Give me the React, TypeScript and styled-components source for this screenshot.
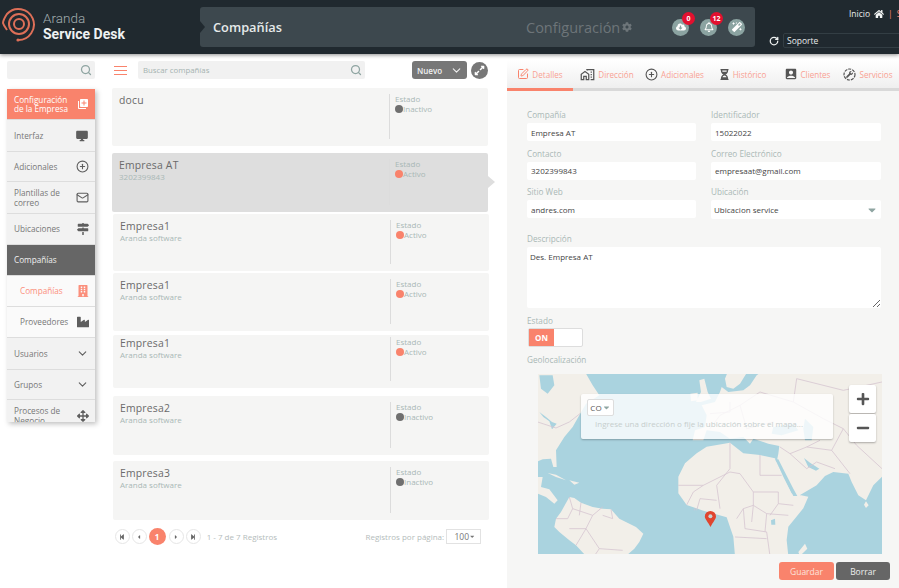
import { ReactNode } from 'react';
import styled, { createGlobalStyle } from 'styled-components';
import {
  FaArrowsAlt,
  FaBuilding,
  FaCloudDownloadAlt,
  FaCog,
  FaExpandAlt,
  FaHome,
  FaHourglassHalf,
  FaIndustry,
  FaMagic,
  FaMapSigns,
  FaPlus,
  FaMinus,
  FaRegBell,
  FaStepBackward,
  FaStepForward,
  FaCaretLeft,
  FaCaretRight,
  FaCaretDown,
  FaWrench,
} from 'react-icons/fa';
import { MdAccountBox, MdDesktopWindows, MdOutlineHomeWork, MdLibraryAdd } from 'react-icons/md';
import { ChevronDown, CirclePlus, Mail, RotateCw, Search, SquarePen } from 'lucide-react';

const CORAL = '#f9836c';
const FONT = '"Open Sans", "Noto Sans", sans-serif';

const GlobalStyle = createGlobalStyle`
  html, body {
    margin: 0;
    padding: 0;
    background: #fff;
    font-family: ${FONT};
  }
  * { box-sizing: border-box; }
`;

const Page = styled.div`
  width: 899px;
  height: 588px;
  overflow: hidden;
  display: flex;
  flex-direction: column;
`;

/* header */

const Header = styled.header`
  height: 54px;
  flex: none;
  background: #20292f;
  box-shadow: 0 1px 4px rgba(0, 0, 0, 0.45);
  display: flex;
  position: relative;
  z-index: 2;
`;

const Brand = styled.div`
  width: 200px;
  padding: 7px 0 0 2px;
  display: flex;
  gap: 5px;
`;

const BrandText = styled.div`
  display: flex;
  flex-direction: column;
  padding-top: 3px;
  font-family: Roboto, sans-serif;
`;

const BrandLight = styled.span`
  font-size: 13.5px;
  line-height: 16px;
  font-weight: 300;
  color: #a3aeb0;
`;

const BrandBold = styled.span`
  font-size: 14px;
  line-height: 17px;
  font-weight: 700;
  color: #eef1f1;
`;

const TitleBar = styled.div`
  width: 555px;
  height: 40px;
  margin-top: 7px;
  background: #3d484e;
  border-radius: 3px;
  display: flex;
  align-items: center;
  padding-left: 13px;
  position: relative;
  &::before {
    content: '';
    position: absolute;
    left: 0;
    top: 14px;
    border-left: 5px solid #20292f;
    border-top: 6px solid transparent;
    border-bottom: 6px solid transparent;
  }
`;

const PageTitle = styled.span`
  font-size: 12.8px;
  font-weight: 600;
  color: #e6eaea;
  width: 313px;
`;

const ConfigLabel = styled.span`
  font-size: 14.5px;
  color: #6d7579;
  width: 93px;
  white-space: nowrap;
`;

const GearWrap = styled.span`
  color: #6d7579;
  font-size: 10px;
  margin-left: 3px;
  display: flex;
  width: 50px;
`;

const RoundIcons = styled.div`
  display: flex;
  gap: 11px;
`;

const RoundIcon = styled.div`
  width: 17px;
  height: 17px;
  border-radius: 50%;
  background: #8ba3a1;
  color: #fff;
  font-size: 10px;
  display: flex;
  align-items: center;
  justify-content: center;
  position: relative;
`;

const Badge = styled.span`
  position: absolute;
  top: -7px;
  right: -6px;
  width: 13px;
  height: 13px;
  border-radius: 50%;
  background: #e3102f;
  color: #fff;
  font-size: 7px;
  font-weight: 700;
  line-height: 13px;
  text-align: center;
`;

const UserArea = styled.div`
  flex: 1;
  padding: 7px 0 0 14px;
  display: flex;
  flex-direction: column;
  overflow: hidden;
`;

const TopLinks = styled.div`
  height: 13px;
  padding-left: 80px;
  display: flex;
  align-items: center;
  font-size: 8.5px;
  color: #e8ecec;
  white-space: nowrap;
`;

const HomeGlyph = styled.span`
  flex: none;
  display: flex;
  margin-left: 4px;
  font-size: 10px;
  color: #f4f6f6;
`;

const Pipe = styled.span`
  color: ${CORAL};
  margin-left: 4px;
`;

const RoleRow = styled.div`
  margin-top: 13px;
  display: flex;
  align-items: center;
  gap: 4px;
  color: #eef1f1;
`;

const RoleSelect = styled.div`
  flex: 1;
  height: 15px;
  margin-right: -4px;
  border: 1px solid #333e44;
  border-radius: 2px;
  padding-left: 3px;
  font-size: 8.5px;
  line-height: 13px;
  color: #e8ecec;
`;

/* content */

const Content = styled.div`
  flex: 1;
  display: flex;
  min-height: 0;
`;

const NavColumn = styled.aside`
  width: 112px;
  flex: none;
  padding: 7px 17px 0 7px;
`;

const SearchBox = styled.div<{ $width?: number }>`
  height: 18px;
  ${(p) => (p.$width ? `width: ${p.$width}px;` : '')}
  background: #f1f1f1;
  border-radius: 2px;
  display: flex;
  align-items: center;
  justify-content: space-between;
  padding: 0 3px 0 5px;
  font-size: 7.8px;
  color: #a4b2b0;
  svg { color: #8fa5a2; }
`;

const NavList = styled.nav`
  margin-top: 10px;
  height: 333px;
  overflow: hidden;
  box-shadow: 2px 2px 5px rgba(0, 0, 0, 0.25);
`;

type NavKind = 'current' | 'open' | 'sub' | 'subActive' | 'plain';

const navBackground: Record<NavKind, string> = {
  current: CORAL,
  open: '#666',
  sub: '#fafafa',
  subActive: '#fafafa',
  plain: '#f2f2f2',
};

const navColor: Record<NavKind, string> = {
  current: '#fff',
  open: '#f1f1f1',
  sub: '#777',
  subActive: '#fb8f7c',
  plain: '#777',
};

const NavItem = styled.div<{ $kind: NavKind; $h: number }>`
  height: ${(p) => p.$h}px;
  background: ${(p) => navBackground[p.$kind]};
  color: ${(p) => navColor[p.$kind]};
  border-bottom: 1px solid #ddd;
  padding: 0 6px 0 ${(p) => (p.$kind === 'sub' || p.$kind === 'subActive' ? 13 : 7)}px;
  display: flex;
  align-items: center;
  justify-content: space-between;
  font-size: 8.2px;
  line-height: 9.5px;
`;

const NavIcon = styled.span<{ $kind: NavKind }>`
  display: flex;
  font-size: 12px;
  color: ${(p) =>
    p.$kind === 'current' ? '#fff' : p.$kind === 'subActive' ? '#fb8f7c' : '#5e5e5e'};
`;

const ListColumn = styled.section`
  width: 395px;
  flex: none;
  padding: 7px 19px 0 0;
  display: flex;
  flex-direction: column;
`;

const ListTools = styled.div`
  height: 18px;
  display: flex;
  align-items: center;
`;

const Burger = styled.div`
  width: 13px;
  height: 9px;
  margin: 0 11px 0 2px;
  border-top: 1px solid ${CORAL};
  border-bottom: 1px solid ${CORAL};
  position: relative;
  &::after {
    content: '';
    position: absolute;
    left: 0;
    right: 0;
    top: 3px;
    height: 1px;
    background: ${CORAL};
  }
`;

const NewButton = styled.div`
  width: 55px;
  height: 18px;
  margin-left: 47px;
  background: #777;
  border-radius: 3px;
  color: #f0f0f0;
  font-size: 8px;
  font-weight: 600;
  display: flex;
  align-items: center;
  justify-content: space-between;
  padding: 0 4px 0 5px;
`;

const ExpandButton = styled.div`
  width: 17px;
  height: 17px;
  margin-left: 4px;
  border-radius: 50%;
  background: #777;
  color: #fff;
  font-size: 11px;
  display: flex;
  align-items: center;
  justify-content: center;
`;

const Row = styled.article<{ $top: number; $h: number; $nudge?: boolean; $selected?: boolean }>`
  height: ${(p) => p.$h}px;
  margin-top: ${(p) => p.$top}px;
  margin-left: ${(p) => (p.$nudge ? 1 : 0)}px;
  margin-right: ${(p) => (p.$nudge ? -1 : 0)}px;
  background: ${(p) => (p.$selected ? '#dedede' : '#f5f5f4')};
  border-radius: 2px;
  display: flex;
  position: relative;
  ${(p) =>
    p.$selected
      ? `&::after {
          content: '';
          position: absolute;
          right: -7px;
          top: 23px;
          border-left: 7px solid #dedede;
          border-top: 6px solid transparent;
          border-bottom: 6px solid transparent;
        }`
      : ''}
`;

const RowMain = styled.div<{ $inset: number }>`
  width: 277px;
  padding: ${(p) => p.$inset}px 0 0 7px;
`;

const RowTitle = styled.div`
  font-size: 10.4px;
  line-height: 13px;
  color: #6a6a6a;
  letter-spacing: 0.2px;
`;

const RowSub = styled.div`
  font-size: 8px;
  line-height: 10px;
  color: #a9b8b6;
`;

const RowState = styled.div<{ $inset: number }>`
  flex: 1;
  margin: ${(p) => p.$inset}px 0 7px;
  padding-left: 5px;
  border-left: 1px solid #dcdcdc;
`;

const StateLabel = styled.div`
  font-size: 8px;
  line-height: 10px;
  color: #a9b8b6;
`;

const StateValue = styled.div`
  font-size: 8px;
  line-height: 10px;
  color: #a9b8b6;
  display: flex;
  align-items: center;
`;

const Dot = styled.span<{ $on: boolean }>`
  width: 8px;
  height: 8px;
  flex: none;
  border-radius: 50%;
  background: ${(p) => (p.$on ? CORAL : '#6f6f6f')};
`;

const Pager = styled.div`
  margin-top: 8px;
  height: 17px;
  display: flex;
  align-items: center;
  padding-left: 2.5px;
  gap: 2px;
`;

const PagerButton = styled.div`
  width: 15px;
  height: 15px;
  border-radius: 50%;
  border: 1px solid #e6e6e6;
  font-size: 6px;
  color: #666;
  display: flex;
  align-items: center;
  justify-content: center;
`;

const PagerCurrent = styled.div`
  width: 17px;
  height: 17px;
  margin-right: 1px;
  border-radius: 50%;
  background: ${CORAL};
  color: #fff;
  font-size: 8px;
  font-weight: 700;
  display: flex;
  align-items: center;
  justify-content: center;
`;

const PagerText = styled.span<{ $width: number }>`
  width: ${(p) => p.$width}px;
  font-size: 8px;
  color: #b4bcbb;
  white-space: nowrap;
`;

const PerPage = styled.div`
  width: 35px;
  height: 15px;
  border: 1px solid #e2e2e2;
  font-size: 8.5px;
  color: #777;
  display: flex;
  align-items: center;
  justify-content: space-between;
  padding: 0 4px 0 8px;
`;

/* details */

const DetailPanel = styled.section`
  flex: 1;
  background: #f6f6f5;
  display: flex;
  flex-direction: column;
  margin-top: 6px;
`;

const Tabs = styled.div`
  height: 31px;
  flex: none;
  background: linear-gradient(#fff, #efefef);
  border-bottom: 3px solid #d9d9d9;
  display: flex;
  position: relative;
  white-space: nowrap;
`;

const Tab = styled.div<{ $width: number; $active?: boolean }>`
  width: ${(p) => p.$width}px;
  height: 31px;
  flex: none;
  border-bottom: 3px solid ${(p) => (p.$active ? CORAL : 'transparent')};
  display: flex;
  align-items: center;
  justify-content: center;
  gap: 3px;
  font-size: 8.1px;
  color: #f9a193;
`;

const TabIcon = styled.span<{ $active?: boolean }>`
  display: flex;
  font-size: 13px;
  color: ${(p) => (p.$active ? CORAL : '#555')};
  position: relative;
`;

const TinyWrench = styled.span`
  position: absolute;
  left: 3px;
  top: 3px;
  font-size: 7px;
  display: flex;
`;

const DetailBody = styled.div`
  padding: 18px 0 0 20px;
`;

const FormGrid = styled.div`
  display: grid;
  grid-template-columns: 169px 170px;
  column-gap: 15px;
  row-gap: 6.5px;
`;

const FieldLabel = styled.label`
  display: block;
  height: 14px;
  font-size: 8.2px;
  line-height: 12px;
  color: #aab8b6;
`;

const TextInput = styled.input`
  display: block;
  width: 100%;
  height: 18px;
  border: 0;
  border-radius: 2px;
  background: #fff;
  padding: 0 4px;
  font: 8px ${FONT};
  color: #444;
  outline: none;
`;

const SelectBox = styled.div`
  height: 19px;
  border-radius: 2px;
  background: #fff;
  padding: 0 3px 0 3px;
  display: flex;
  align-items: center;
  justify-content: space-between;
  font-size: 8px;
  color: #444;
  svg { color: #8fa5a2; }
`;

const DescField = styled.div`
  width: 354px;
  margin-top: 14px;
`;

const DescInput = styled.textarea`
  display: block;
  width: 100%;
  height: 61px;
  border: 0;
  border-radius: 2px;
  background: #fff;
  padding: 4px 3px;
  font: 8px ${FONT};
  color: #444;
  outline: none;
`;

const StateField = styled.div`
  margin-top: 7px;
  height: 32px;
`;

const Toggle = styled.div`
  width: 55px;
  height: 19px;
  margin-left: 1px;
  margin-top: -1px;
  border: 1px solid #ddd;
  border-radius: 2px;
  background: #fff;
  display: flex;
`;

const ToggleOn = styled.div`
  width: 25px;
  background: ${CORAL};
  color: #fff;
  font-size: 8px;
  font-weight: 700;
  display: flex;
  align-items: center;
  justify-content: center;
`;

const GeoLabel = styled(FieldLabel)`
  margin-top: 7px;
  margin-bottom: 6px;
`;

const MapFrame = styled.div`
  width: 344px;
  height: 180px;
  margin-left: 11px;
  position: relative;
  overflow: hidden;
`;

const MapCanvas = styled.svg`
  display: block;
  width: 344px;
  height: 180px;
`;

const AddressCard = styled.div`
  position: absolute;
  left: 43px;
  top: 20px;
  width: 252px;
  height: 45px;
  background: rgba(255, 255, 255, 0.8);
  border-radius: 2px;
  box-shadow: 0 1px 2px rgba(0, 0, 0, 0.25);
  padding: 5px 0 0 6px;
`;

const CountryPick = styled.div`
  width: 27px;
  height: 17px;
  background: #fff;
  border: 1px solid #ddd;
  border-radius: 2px;
  font-size: 8px;
  color: #555;
  display: flex;
  align-items: center;
  justify-content: center;
  svg { color: #8fa5a2; }
`;

const AddressHint = styled.div`
  margin: 3px 0 0 8px;
  font-size: 8px;
  line-height: 10px;
  color: #c6cecd;
  white-space: nowrap;
`;

const ZoomButtons = styled.div`
  position: absolute;
  left: 311px;
  top: 11px;
  display: flex;
  flex-direction: column;
  gap: 1px;
`;

const ZoomButton = styled.div`
  width: 27px;
  height: 28px;
  background: #fff;
  border-radius: 2px;
  box-shadow: 0 1px 2px rgba(0, 0, 0, 0.3);
  color: #555;
  font-size: 14px;
  display: flex;
  align-items: center;
  justify-content: center;
`;

const FormActions = styled.div`
  margin: 8px 9px 0 0;
  display: flex;
  justify-content: flex-end;
  gap: 2px;
`;

const ActionButton = styled.button<{ $primary?: boolean }>`
  width: ${(p) => (p.$primary ? 55 : 54)}px;
  height: 18px;
  border: 0;
  border-radius: 3px;
  background: ${(p) => (p.$primary ? CORAL : '#666')};
  color: ${(p) => (p.$primary ? '#fde3dd' : '#eee')};
  font: 8.5px ${FONT};
  padding: 0;
`;

/* data */

type NavEntry = { label: ReactNode; h: number; kind: NavKind; icon: ReactNode };

const navEntries: NavEntry[] = [
  { label: <>Configuración<br />de la Empresa</>, h: 31, kind: 'current', icon: <MdLibraryAdd /> },
  { label: 'Interfaz', h: 32, kind: 'plain', icon: <MdDesktopWindows size={14} /> },
  { label: 'Adicionales', h: 30, kind: 'plain', icon: <CirclePlus size={13} /> },
  { label: <>Plantillas de<br />correo</>, h: 32, kind: 'plain', icon: <Mail size={13} /> },
  { label: 'Ubicaciones', h: 31, kind: 'plain', icon: <FaMapSigns /> },
  { label: 'Compañías', h: 31, kind: 'open', icon: null },
  { label: 'Compañías', h: 31, kind: 'subActive', icon: <FaBuilding /> },
  { label: 'Proveedores', h: 31, kind: 'sub', icon: <FaIndustry /> },
  { label: 'Usuarios', h: 32, kind: 'plain', icon: <ChevronDown size={13} /> },
  { label: 'Grupos', h: 30, kind: 'plain', icon: <ChevronDown size={13} /> },
  { label: <>Procesos de<br />Negocio</>, h: 32, kind: 'plain', icon: <FaArrowsAlt /> },
];

type Company = {
  name: string;
  sub: string;
  on: boolean;
  top: number;
  h: number;
  inset: number;
  nudge?: boolean;
  selected?: boolean;
};

const companies: Company[] = [
  { name: 'docu', sub: '', on: false, top: 9, h: 58, inset: 6 },
  { name: 'Empresa AT', sub: '3202399843', on: true, top: 7, h: 59, inset: 6, selected: true },
  { name: 'Empresa1', sub: 'Aranda software', on: true, top: 2, h: 57, inset: 6, nudge: true },
  { name: 'Empresa1', sub: 'Aranda software', on: true, top: 2, h: 58, inset: 6, nudge: true },
  { name: 'Empresa1', sub: 'Aranda software', on: true, top: 4, h: 53, inset: 2, nudge: true },
  { name: 'Empresa2', sub: 'Aranda software', on: false, top: 8, h: 59, inset: 6, nudge: true },
  { name: 'Empresa3', sub: 'Aranda software', on: false, top: 6, h: 59, inset: 6, nudge: true },
];

// map outlines, in 3x px of the map's west and east halves
const westLand = [
  'M5 5 L150 5 L170 40 L190 70 L150 95 L130 130 L110 165 L85 195 L60 235 L62 285 L52 285 L45 260 L20 262 L5 268 Z',
  'M5 315 L20 315 L15 345 L40 352 L65 385 L55 395 L30 375 L5 365 Z',
  'M35 303 L60 308 L90 325 L60 315 Z',
  'M100 325 L130 332 L115 338 Z',
  'M60 440 L75 420 L100 375 L115 378 L135 392 L170 405 L200 410 L225 412 L250 440 L300 465 L322 485 L310 510 L295 530 L270 552 L150 552 L120 520 L100 505 L70 480 L55 465 Z',
  'M490 25 L505 20 L515 60 L525 80 L495 90 L480 90 L495 60 Z',
  'M463 65 L485 62 L485 85 L465 88 Z',
];

const eastLand = [
  'M160 -5 L520 -5 L520 310 L490 340 L468 385 L445 370 L425 330 L415 305 L370 300 L345 312 L320 340 L255 378 L245 350 L200 270 L205 245 L208 222 L175 215 L130 200 L120 215 L100 195 L60 200 L30 180 L-10 175 L-20 205 L-52 205 L-45 175 L-15 165 L-10 130 L-25 100 L15 90 L30 60 L35 45 L55 60 L100 55 L120 40 L140 10 Z',
  'M55 -5 L115 -5 L90 35 L70 50 L50 45 L45 20 Z',
  'M-95 314 L-75 274 L-40 244 L-10 224 L60 212 L100 244 L150 249 L195 259 L220 314 L245 364 L295 374 L280 409 L235 464 L230 504 L235 552 L75 552 L70 494 L50 436 L-20 416 L-70 399 L-95 364 Z',
  'M285 515 L292 530 L270 552 L265 540 Z',
  'M468 388 L476 400 L468 408 L462 398 Z',
];

const eastWater = [
  'M195 262 L205 262 L250 350 L262 372 L250 372 L220 310 Z',
  'M282 258 L300 272 L328 290 L318 296 L295 285 Z',
  'M190 165 L250 155 L265 175 L215 190 L185 185 Z',
  'M285 140 L310 165 L305 205 L285 205 L280 170 Z',
  'M183 445 L195 440 L196 458 L184 458 Z',
];

const westWater = [
  'M10 10 L50 10 L55 40 L35 65 L15 50 Z',
  'M10 120 L30 135 L48 150 L62 155 L48 172 L40 148 L22 135 Z',
];

const westBorders = [
  'M5 150 L60 168 L100 150 L132 125',
  'M100 375 L110 410 L95 440 L60 440',
  'M110 410 L170 430 L200 405',
  'M100 470 L150 470 L190 530 L175 552',
  'M135 392 L130 430',
  'M225 412 L230 440 L200 430',
  'M150 470 L120 520',
  'M190 530 L260 535',
  'M170 430 L150 470',
  'M430 310 L480 290 L525 300',
  'M440 350 L525 350',
  'M475 415 L490 380 L525 380',
];

const eastBorders = [
  'M-20 340 L60 300 L90 305 L130 360 L130 400',
  'M60 212 L60 290',
  'M150 249 L150 310 L215 310',
  'M130 360 L205 360 L205 395 L250 400',
  'M100 410 L130 400 L170 425 L235 430',
  'M80 440 L100 410 L105 470 L170 480 L180 552',
  'M75 495 L170 500',
  'M20 385 L-30 380 L-40 415',
  'M20 340 L30 410',
  'M-95 340 L-20 340',
  'M60 290 L20 340',
  'M-70 399 L-50 360 L-20 340',
  'M170 425 L165 480',
  'M205 395 L180 430',
  'M130 400 L125 450',
  'M240 245 L290 290 L320 270 L375 290',
  'M210 225 L240 245 L290 225 L365 235 L420 305',
  'M365 235 L400 170 L440 220 L516 290',
  'M290 225 L330 205',
  'M0 170 L30 130 L90 100 L110 170 L190 150',
  'M90 100 L150 60 L250 90 L340 140 L400 170',
  'M250 90 L260 20 L400 55 L516 30',
  'M0 125 L60 120 L60 90',
];

const tabs = [
  { label: 'Detalles', width: 66, active: true, icon: <SquarePen size={12} /> },
  { label: 'Dirección', width: 68, icon: <MdOutlineHomeWork size={15} /> },
  { label: 'Adicionales', width: 67, icon: <CirclePlus size={13} /> },
  { label: 'Histórico', width: 69, icon: <FaHourglassHalf size={11} /> },
  { label: 'Clientes', width: 60, icon: <MdAccountBox size={14} /> },
  { label: 'Servicios', width: 62, icon: <ServiceIcon /> },
];

function ServiceIcon() {
  return (
    <>
      <svg width="13" height="13" viewBox="0 0 13 13">
        <circle cx="6.5" cy="6.5" r="5.5" fill="none" stroke="#555" strokeWidth="1.2" strokeDasharray="3 1" />
      </svg>
      <TinyWrench>
        <FaWrench />
      </TinyWrench>
    </>
  );
}

function Logo() {
  return (
    <svg width="36" height="38" viewBox="0 0 36 38" fill="none" stroke="#dd6f58" strokeWidth="2">
      <circle cx="17" cy="17" r="5" />
      <circle cx="17" cy="17" r="10" />
      <path d="M16 33 A15.5 15.5 0 1 0 5 7 C3 10 1 13 1 16 C2 19 4 21 5 23" />
      <circle cx="16" cy="33" r="1.6" fill="#dd6f58" stroke="none" />
    </svg>
  );
}

function WorldMap() {
  return (
    <MapCanvas viewBox="0 0 344 180">
      <rect width="344" height="180" fill="#aad3df" />
      <g transform="translate(-2 -2) scale(0.3333)">
        <path d={westLand.join(' ')} fill="#f2efe9" />
        <path d={westWater.join(' ')} fill="#aad3df" />
        <path d={westBorders.join(' ')} fill="none" stroke="#d5c5d0" strokeWidth="2.4" />
      </g>
      <g transform="translate(172 -2) scale(0.3333)">
        <path d={eastLand.join(' ')} fill="#f2efe9" />
        <path d={eastWater.join(' ')} fill="#aad3df" />
        <path d={eastBorders.join(' ')} fill="none" stroke="#d5c5d0" strokeWidth="2.4" />
      </g>
      <path
        d="M172.5 153 C170 148 166.8 145 166.8 142.5 A5.6 5.6 0 0 1 178 142.5 C178 145 175 148 172.5 153 Z"
        fill="#e0452f"
      />
      <circle cx="172.4" cy="142.3" r="2" fill="#c9d3d3" />
    </MapCanvas>
  );
}

export default function App() {
  return (
    <Page>
      <GlobalStyle />
      <Header>
        <Brand>
          <Logo />
          <BrandText>
            <BrandLight>Aranda</BrandLight>
            <BrandBold>Service Desk</BrandBold>
          </BrandText>
        </Brand>
        <TitleBar>
          <PageTitle>Compañías</PageTitle>
          <ConfigLabel>Configuración</ConfigLabel>
          <GearWrap>
            <FaCog />
          </GearWrap>
          <RoundIcons>
            <RoundIcon>
              <FaCloudDownloadAlt />
              <Badge>0</Badge>
            </RoundIcon>
            <RoundIcon>
              <FaRegBell />
              <Badge>12</Badge>
            </RoundIcon>
            <RoundIcon>
              <FaMagic />
            </RoundIcon>
          </RoundIcons>
        </TitleBar>
        <UserArea>
          <TopLinks>
            Inicio
            <HomeGlyph>
              <FaHome />
            </HomeGlyph>
            <Pipe>|</Pipe>
            <Pipe>S</Pipe>
          </TopLinks>
          <RoleRow>
            <RotateCw size={10} strokeWidth={3} />
            <RoleSelect>Soporte</RoleSelect>
          </RoleRow>
        </UserArea>
      </Header>

      <Content>
        <NavColumn>
          <SearchBox>
            <span />
            <Search size={12} strokeWidth={2.5} />
          </SearchBox>
          <NavList>
            {navEntries.map((item, i) => (
              <NavItem key={i} $kind={item.kind} $h={item.h}>
                <span>{item.label}</span>
                <NavIcon $kind={item.kind}>{item.icon}</NavIcon>
              </NavItem>
            ))}
          </NavList>
        </NavColumn>

        <ListColumn>
          <ListTools>
            <Burger />
            <SearchBox $width={227}>
              Buscar compañías
              <Search size={12} strokeWidth={2.5} />
            </SearchBox>
            <NewButton>
              Nuevo
              <ChevronDown size={13} />
            </NewButton>
            <ExpandButton>
              <FaExpandAlt />
            </ExpandButton>
          </ListTools>

          {companies.map((c, i) => (
            <Row key={i} $top={c.top} $h={c.h} $nudge={c.nudge} $selected={c.selected}>
              <RowMain $inset={c.inset}>
                <RowTitle>{c.name}</RowTitle>
                <RowSub>{c.sub}</RowSub>
              </RowMain>
              <RowState $inset={c.inset}>
                <StateLabel>Estado</StateLabel>
                <StateValue>
                  <Dot $on={c.on} />
                  {c.on ? 'Activo' : 'Inactivo'}
                </StateValue>
              </RowState>
            </Row>
          ))}

          <Pager>
            <PagerButton><FaStepBackward /></PagerButton>
            <PagerButton><FaCaretLeft /></PagerButton>
            <PagerCurrent>1</PagerCurrent>
            <PagerButton><FaCaretRight /></PagerButton>
            <PagerButton><FaStepForward /></PagerButton>
            <PagerText $width={161}>&nbsp;&nbsp;1 - 7 de 7 Registros</PagerText>
            <PagerText $width={78}>Registros por página:</PagerText>
            <PerPage>
              100
              <FaCaretDown size={7} />
            </PerPage>
          </Pager>
        </ListColumn>

        <DetailPanel>
          <Tabs>
            {tabs.map((t) => (
              <Tab key={t.label} $width={t.width} $active={t.active}>
                <TabIcon $active={t.active}>{t.icon}</TabIcon>
                {t.label}
              </Tab>
            ))}
          </Tabs>
          <DetailBody>
            <FormGrid>
              <div>
                <FieldLabel>Compañía</FieldLabel>
                <TextInput readOnly value="Empresa AT" />
              </div>
              <div>
                <FieldLabel>Identificador</FieldLabel>
                <TextInput readOnly value="15022022" />
              </div>
              <div>
                <FieldLabel>Contacto</FieldLabel>
                <TextInput readOnly value="3202399843" />
              </div>
              <div>
                <FieldLabel>Correo Electrónico</FieldLabel>
                <TextInput readOnly value="empresaat@gmail.com" />
              </div>
              <div>
                <FieldLabel>Sitio Web</FieldLabel>
                <TextInput readOnly value="andres.com" />
              </div>
              <div>
                <FieldLabel>Ubicación</FieldLabel>
                <SelectBox>
                  Ubicacion service
                  <FaCaretDown size={12} />
                </SelectBox>
              </div>
            </FormGrid>
            <DescField>
              <FieldLabel>Descripción</FieldLabel>
              <DescInput readOnly value="Des. Empresa AT" />
            </DescField>
            <StateField>
              <FieldLabel>Estado</FieldLabel>
              <Toggle>
                <ToggleOn>ON</ToggleOn>
              </Toggle>
            </StateField>
            <GeoLabel>Geolocalización</GeoLabel>
            <MapFrame>
              <WorldMap />
              <AddressCard>
                <CountryPick>
                  CO
                  <FaCaretDown size={9} />
                </CountryPick>
                <AddressHint>Ingrese una dirección o fije la ubicación sobre el mapa...</AddressHint>
              </AddressCard>
              <ZoomButtons>
                <ZoomButton><FaPlus /></ZoomButton>
                <ZoomButton><FaMinus /></ZoomButton>
              </ZoomButtons>
            </MapFrame>
            <FormActions>
              <ActionButton $primary>Guardar</ActionButton>
              <ActionButton>Borrar</ActionButton>
            </FormActions>
          </DetailBody>
        </DetailPanel>
      </Content>
    </Page>
  );
}
